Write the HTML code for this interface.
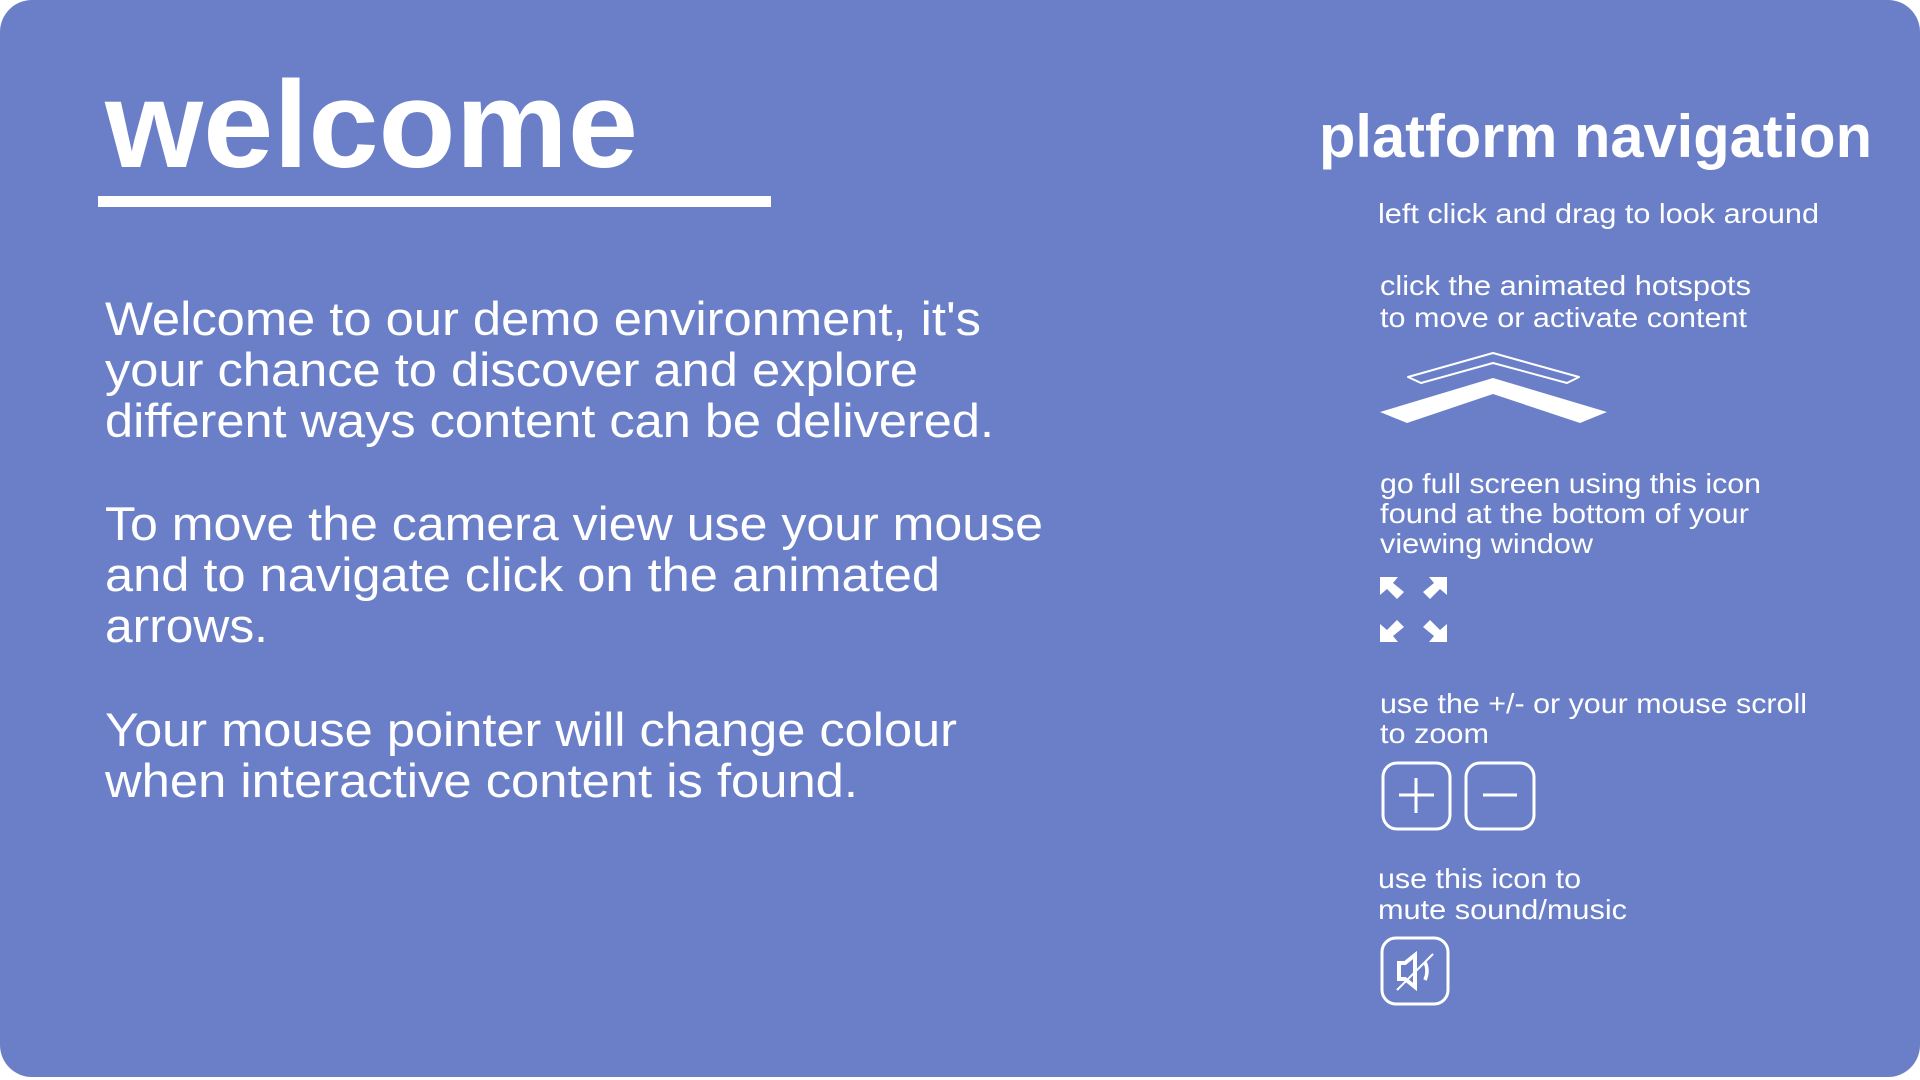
<!DOCTYPE html>
<html><head><meta charset="utf-8"><style>
html,body{margin:0;padding:0;background:#fff;width:1920px;height:1080px;overflow:hidden}
svg{display:block}
text{font-family:"Liberation Sans",Arial,sans-serif;fill:#fff}
</style></head><body>
<svg width="1920" height="1080" viewBox="0 0 1920 1080" xmlns="http://www.w3.org/2000/svg">
<rect x="0" y="0" width="1920" height="1077" rx="32" ry="32" fill="#6a7fc8"/>
<text x="105" y="167" font-size="123" font-weight="bold" textLength="533" lengthAdjust="spacingAndGlyphs">welcome</text>
<rect x="98" y="196" width="673" height="11" fill="#fff"/>
<g font-size="47">
<text x="105" y="335" textLength="876" lengthAdjust="spacingAndGlyphs">Welcome to our demo environment, it's</text>
<text x="105" y="386" textLength="813" lengthAdjust="spacingAndGlyphs">your chance to discover and explore</text>
<text x="105" y="437" textLength="889" lengthAdjust="spacingAndGlyphs">different ways content can be delivered.</text>
<text x="105" y="540" textLength="938" lengthAdjust="spacingAndGlyphs">To move the camera view use your mouse</text>
<text x="105" y="591" textLength="835" lengthAdjust="spacingAndGlyphs">and to navigate click on the animated</text>
<text x="105" y="642" textLength="163" lengthAdjust="spacingAndGlyphs">arrows.</text>
<text x="105" y="746" textLength="852" lengthAdjust="spacingAndGlyphs">Your mouse pointer will change colour</text>
<text x="105" y="797" textLength="753" lengthAdjust="spacingAndGlyphs">when interactive content is found.</text>
</g>
<text x="1319" y="157" font-size="60" font-weight="bold" textLength="553" lengthAdjust="spacingAndGlyphs">platform navigation</text>
<g font-size="28">
<text x="1378" y="223" textLength="441" lengthAdjust="spacingAndGlyphs">left click and drag to look around</text>
<text x="1380" y="295" textLength="371" lengthAdjust="spacingAndGlyphs">click the animated hotspots</text>
<text x="1380" y="327" textLength="367" lengthAdjust="spacingAndGlyphs">to move or activate content</text>
<text x="1380" y="493" textLength="381" lengthAdjust="spacingAndGlyphs">go full screen using this icon</text>
<text x="1380" y="523" textLength="369" lengthAdjust="spacingAndGlyphs">found at the bottom of your</text>
<text x="1380" y="553" textLength="213" lengthAdjust="spacingAndGlyphs">viewing window</text>
<text x="1380" y="713" textLength="427" lengthAdjust="spacingAndGlyphs">use the +/- or your mouse scroll</text>
<text x="1380" y="743" textLength="109" lengthAdjust="spacingAndGlyphs">to zoom</text>
<text x="1378" y="888" textLength="203" lengthAdjust="spacingAndGlyphs">use this icon to</text>
<text x="1378" y="919" textLength="249" lengthAdjust="spacingAndGlyphs">mute sound/music</text>
</g>
<polygon points="1408,377 1493,353 1579,377 1567,383 1493,363 1421,383" fill="none" stroke="#fff" stroke-width="2" stroke-linejoin="round"/>
<polygon points="1380,412 1493,378 1607,412 1580,423 1493,394 1407,423" fill="#fff"/>
<g fill="#fff">
<polygon id="a" points="1380,577 1398,577 1393,583 1404,592 1397,599 1387,589 1380,595"/>
<polygon transform="translate(2827,0) scale(-1,1)" points="1380,577 1398,577 1393,583 1404,592 1397,599 1387,589 1380,595"/>
<polygon transform="translate(0,1219) scale(1,-1)" points="1380,577 1398,577 1393,583 1404,592 1397,599 1387,589 1380,595"/>
<polygon transform="translate(2827,1219) scale(-1,-1)" points="1380,577 1398,577 1393,583 1404,592 1397,599 1387,589 1380,595"/>
</g>
<g fill="none" stroke="#fff" stroke-width="3">
<rect x="1383" y="763" width="67" height="66" rx="14"/>
<rect x="1466" y="763" width="68" height="66" rx="14"/>
<line x1="1399" y1="795" x2="1434" y2="795"/>
<line x1="1416" y1="778" x2="1416" y2="813"/>
<line x1="1483" y1="795" x2="1517" y2="795"/>
<rect x="1382" y="938" width="66" height="66" rx="14"/>
<path d="M1399,963 h6 l10,-8 v32 l-10,-8 h-6 z" stroke-width="4"/>
<path d="M1425,962 q4,9 0,18" stroke-width="3.5"/>
<line x1="1397" y1="990" x2="1433" y2="954" stroke-width="2"/>
</g>
</svg>
</body></html>
